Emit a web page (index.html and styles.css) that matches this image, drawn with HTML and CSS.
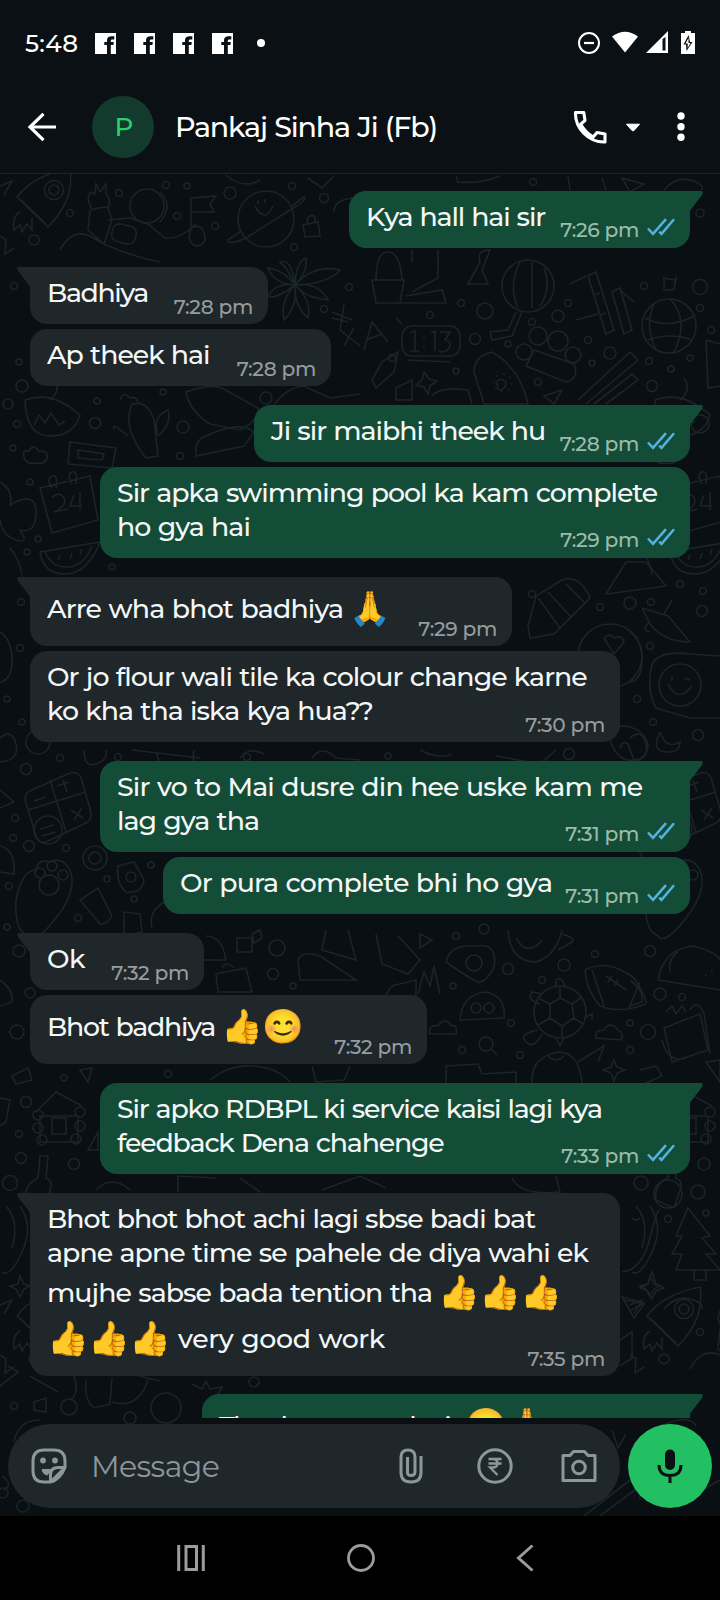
FILE: index.html
```html
<!DOCTYPE html>
<html lang="en">
<head>
<meta charset="utf-8">
<title>Pankaj Sinha Ji (Fb)</title>
<link rel="stylesheet" href="styles.css">
</head>
<body>
<svg class="defs" aria-hidden="true">
  <defs>
    <symbol id="ticks" viewBox="0 0 28 18"><path d="M1 10.5 6 15.8 19 1.2M12.3 13.6 14.5 15.8 27 1.2" fill="none" stroke="#53b3de" stroke-width="2.5"/></symbol>
    <symbol id="fb" viewBox="0 0 21 21"><path fill="#fff" fill-rule="evenodd" d="M0 0h21v21H0zM12 21h3.800V12h2.600l.4-3h-3V7.500q0-1 1.300-1h2.200V3.300h-2.500Q12 3.300 12 7.200V9H9.300v3H12z"/></symbol>
  </defs>
</svg>
<div class="phone">
  <div class="status">
    <span class="clock">5:48</span>
    <div class="notifs">
      <svg><use href="#fb"/></svg><svg><use href="#fb"/></svg><svg><use href="#fb"/></svg><svg><use href="#fb"/></svg>
    </div>
    <i class="dot"></i>
    <svg class="sys" width="120" height="26" viewBox="0 0 120 26">
      <circle cx="12" cy="13" r="10" fill="none" stroke="#fff" stroke-width="2"/><path d="M7 13h10" stroke="#fff" stroke-width="2.200"/>
      <path fill="#fff" d="M35 6.500Q48 -3 61 6.500L48 22.500z"/>
      <path fill="#fff" d="M69 23 91 1V23zM85.500 9V20.500H88.500V7z" fill-rule="evenodd"/>
      <path fill="#fff" fill-rule="evenodd" d="M104 3h4V1h6v2h4v21h-14zM111.600 5 106.500 14.500h2.500L109.500 21 115.500 12h-2.500z"/><path fill="#fff" d="M111.500 8 108.500 13.500h2.200V18l2.800-5h-2z"/>
    </svg>
  </div>
  <header class="head">
    <svg class="back" width="30" height="30" viewBox="0 0 30 30" fill="none" stroke="#fff" stroke-width="3.200"><path d="M16.500 1.800 3 15 16.500 28.200M3 15H29"/></svg>
    <div class="avatar">P</div>
    <h1>Pankaj Sinha Ji (Fb)</h1>
    <svg class="phone-icon" width="34" height="34" viewBox="0 0 34 34" fill="none" stroke="#fff" stroke-width="3.100" stroke-linejoin="round"><path d="M2.500 2.500H10.800L12 10.500 7.600 14.200Q12.600 22.500 20.200 27L24 22.500 32 24V32Q20 32.500 11 23.500T2.500 2.500z"/></svg>
    <svg class="caret" width="16" height="9" viewBox="0 0 16 9"><path d="M1.500 1.200H14.500L9.200 7.300Q8 8.500 6.800 7.300z" fill="#fff" stroke="#fff" stroke-linejoin="round"/></svg>
    <svg class="menu" width="8" height="30" viewBox="0 0 8 30" fill="#fff"><circle cx="4" cy="4" r="3.700"/><circle cx="4" cy="14.700" r="3.700"/><circle cx="4" cy="25.200" r="3.700"/></svg>
  </header>

  <main class="main">
    <svg class="wall" width="720" height="1342" viewBox="0 174 720 1342" fill="none" aria-hidden="true">
      <defs>
        <g id="edge">
          <!-- calendar, melon, calculator, paw bag, house, bottle -->
          <path d="M40 488 90 476 98 520 52 533zM52 488q-6-10 0-12t4 12M72 484q-6-10 0-12t4 12M52 497q8-6 12 1t-10 14l14-3M74 495l-4 11h12M80 492v18"/>
          <path d="M40 552Q44 575 66 574T100 542zM45 552Q52 568 68 567T92 546M58 560l2-5M70 559l2-6M80 555l2-6"/>
          <path d="M32 790 70 773Q78 771 81 778L91 812Q92 820 86 823L46 842Q38 843 36 836L25 800Q25 792 32 790zM50 780 66 832M28 810 86 792M34 801l12-4M57 786l12-4M63 780l4 12M71 810l12 8M82 808l-8 12"/>
          <circle cx="48" cy="830" r="14"/><path d="M40 829l14-4M42 836l14-4"/>
          <path d="M16 900Q22 870 36 870Q38 858 50 862Q62 856 70 870Q78 890 56 918T28 936Q14 930 16 900z"/><circle cx="49" cy="885" r="10"/><circle cx="40" cy="873" r="5"/><circle cx="52" cy="866" r="5"/><circle cx="63" cy="875" r="5"/>
          <path d="M36 1112 56 1092 82 1106M40 1116H78V1142H40zM52 1118H66V1134H52z"/><circle cx="38" cy="1115" r="5"/><circle cx="38" cy="1128" r="5"/><circle cx="42" cy="1140" r="5"/><circle cx="80" cy="1112" r="5"/><circle cx="80" cy="1126" r="5"/><circle cx="76" cy="1139" r="5"/>
          <path d="M40 1156h8l-2 22q8 4 4 12l-6 18-18-8q-2-16 12-22z"/>
          <path d="M25 400Q52 390 80 415Q74 436 50 436T25 400zM34 425l5-10 6 8 6-10 8 12 6-4M50 400q12-10 4-22"/>
          <path d="M24 457q-2-8 5-6 4-8 10 0 10 0 8 8-4 6-10 4-12 2-13-6z"/>
          <path d="M0 482Q14 490 10 505 36 490 36 512T20 530Q30 545 16 540T0 520M10 548Q20 560 22 575"/>
          <path d="M0 632Q12 640 12 660T0 682M0 738Q12 728 16 744T0 762M0 790l14 12-14 6M0 846Q16 850 14 874L0 872M0 980Q14 990 12 1002L0 1006M0 1098l10 2-4 22-6 4"/>
          <path d="M20 1206Q34 1226 22 1252T2 1272M6 1206Q20 1222 12 1248M20 1276l4 8 6 2-6 3-4 8-4-8-6-3 8-2z"/>
        </g>
        <g id="top">
          <path d="M17 197Q32 176 70 168 75 200 48 227zM20 199 46 224"/><circle cx="54" cy="190" r="9.500"/><circle cx="54" cy="190" r="5"/><path d="M20 212q-8 4-6 18l6-5 2 7 5-8 5 6 0-12"/>
          <path d="M0 186 12 181 4 195M0 236 6 240 5 254 14 248"/>
          <circle cx="147" cy="206" r="17"/><path d="M160 192Q174 206 160 222M88 200l4 10q12-4 16-2 4-8-2-14l0-10-6 8-4-8-1 10-5-2zM90 210 88 230 104 244 112 220 108 208M108 220 130 218 148 224 165 238Q180 240 196 224M60 250Q72 228 90 236L104 244M104 244Q130 256 160 262"/><rect x="112" y="225" width="24" height="18" rx="7" transform="rotate(14 124 234)"/>
          <path d="M191 228V198L216 196 210 204 214 212 192 212M191 228q-5 16 6 18 12-2 6-16-4-6-12-2"/>
          <circle cx="266" cy="219" r="28"/><path d="M292 206 304 197Q308 200 290 210L246 238Q228 246 228 240L240 232M255 206q10 18 18 0M258 200v4M265 199v4"/>
          <path d="M303 225 318 222 320 236 305 237zM307 224q0-10 7-8 2 3 1 7"/>
          <path d="M226 175Q244 190 260 180M308 178 322 188 334 176M456 176 458 182Q480 184 500 176M568 176 570 190M602 178 606 190M622 178 644 184 630 192zM664 190Q676 176 690 180T702 190M352 198Q334 200 334 212"/>
          <circle cx="166" cy="185" r="3.500"/><circle cx="187" cy="186" r="3"/><circle cx="119" cy="193" r="3.500"/><circle cx="230" cy="193" r="6"/><circle cx="70" cy="213" r="3.500"/><circle cx="177" cy="216" r="3.500"/><circle cx="34" cy="240" r="5"/><circle cx="215" cy="226" r="3.500"/><circle cx="292" cy="186" r="3.500"/><circle cx="324" cy="198" r="4.500"/><circle cx="294" cy="247" r="3.500"/>
        </g>
      </defs>
      <g stroke="#1b2428" stroke-width="1.600">
        <use href="#edge"/><use href="#edge" x="630"/><use href="#top"/><use href="#top" x="630" y="1119"/><use href="#top" y="1119"/>
        <path d="M295 285Q288 268 280 262 292 258 295 285Q296 262 306 258 308 272 295 285Q314 264 340 270 328 284 295 285Q318 282 328 300 306 298 295 285Q312 300 308 318 294 306 295 285Q298 306 284 320 280 300 295 285Q276 300 268 296 276 282 295 285Q274 284 268 268 284 270 295 285"/>
        <path d="M332 312 352 320M344 304 340 330M348 322 332 318M354 328 344 346M340 330 360 346M364 350 372 322 388 342M366 340 382 334"/>
        <rect x="402" y="326" width="58" height="30" rx="10"/><path d="M410 333l5-2v20M410 351h9M424 337v2M424 346v2M431 333l4-2v20M440 332h10l-5 8q8 2 4 8t-10 3M408 360l42 2M396 318l6 6"/>
        <path d="M372 280H404L400 303H376zM376 280Q376 252 388 252T402 280M376 303H446L442 290 406 296M412 262V250M438 250V278L412 292M468 284 480 262Q476 250 490 250L482 270 488 284z"/>
        <circle cx="528" cy="286" r="26"/><path d="M520 262Q508 286 518 308M532 262V308M544 268Q552 288 540 306M516 312 508 330 490 332 492 340 512 336 522 312"/>
        <path d="M588 276 606 334 614 330 596 272zM612 292 624 334 632 330 620 288zM570 284 586 276M576 320 598 314M620 290 634 302M594 295l6-2M600 315l6-2"/>
        <circle cx="669" cy="326" r="27"/><path d="M654 304Q644 326 656 349M670 299Q690 320 674 352M645 318Q668 330 694 316M648 340Q670 332 692 340"/>
        <path d="M664 278 674 280 676 278 674 290 664 290zM706 340 720 344M706 340 708 388 720 386"/>
        <path d="M474 372Q474 356 492 352 520 368 528 404H484zM497 384q0-6 6-4t1 8-7-4"/><circle cx="503" cy="383" r="9" stroke-dasharray="2 5"/>
        <circle cx="538" cy="336" r="9"/><circle cx="558" cy="341" r="10"/><circle cx="524" cy="352" r="8"/><circle cx="573" cy="355" r="8"/><path d="M534 350 526 366 566 382Q580 378 574 364z"/>
        <path d="M578 400 630 352 638 360 586 404M594 404 632 374 638 380 606 404"/>
        <path d="M114 430Q112 424 118 428L128 436M132 404Q148 400 154 420L158 456 146 458Q124 430 130 410zM158 436Q152 416 168 410 172 424 158 436M120 400q4-10 10-2 8-2 8 6"/>
        <path d="M70 442 116 448 112 468 68 464zM78 450 104 454 102 460 78 458zM186 392Q210 384 222 388L258 408Q260 420 240 430L210 424Q190 412 186 392zM196 456Q194 440 206 436 240 420 254 432L244 446zM272 408Q284 388 304 386L330 398 360 394"/>
        <path d="M372 380 382 362 398 352 394 372 376 388zM424 372l5 7 8 2-7 5-2 8-4-7-8-2 6-5zM396 388 412 380 412 400H396zM432 396Q440 386 468 390L472 404M544 396 562 390 554 404z"/>
        <path d="M528 626 536 596 562 580Q580 574 590 598L554 634 530 638zM538 598 560 628M548 592 572 618M566 584 586 604M606 594 626 562 646 562 666 586z"/>
        <circle cx="610" cy="656" r="32"/><path d="M604 638q6-6 10 0 8-4 10 4l-10 12zM642 608 668 616 690 642Q664 642 650 624L642 608M664 614 672 600M650 622q-10 8 0 10"/>
        <path d="M652 664Q660 650 690 654L720 656M652 664Q646 690 656 708L690 718H720"/><circle cx="680" cy="685" r="21"/><path d="M668 684q10 20 24 2M672 676v5M684 678l6 2M660 732q-10 20 8 20 12 0 12-10-14 8-20-10M610 740q0-14 16-14 20 4 22 20-2 16-20 14-12-2-18-20M620 748q2-8 8-4l6 16"/>
        <path d="M84 750Q84 768 96 764T106 750M132 750 200 758M156 752l4 12M194 750q-2 14 0 18M420 750Q440 760 452 754M496 756 540 764 556 750M312 758q10-14 24 0l24 2M240 758q8-12 24-4"/>
        <circle cx="95" cy="858" r="12"/><circle cx="95" cy="858" r="6"/><path d="M118 866 134 862 144 880Q142 894 126 892 116 884 118 866z"/><circle cx="131" cy="877" r="5"/><path d="M80 900 98 888 112 916Q108 924 100 924zM124 912l16 2 2 18-18 4zM152 928Q148 912 164 902"/>
        <path d="M237 938H252V952H237zM252 934l8-4 2 8-8 5zM206 936Q222 936 226 960L204 960M216 974 246 968 252 992H218zM222 968q4-8 12 0M326 930 322 950 356 960 348 930M298 960Q302 950 320 956L356 980H300zM376 934 382 964 408 974 420 960 398 936M386 996Q390 984 400 984L416 980V996zM418 994 424 972 430 986 434 966 440 994M420 934 432 940 420 948z"/>
        <path d="M446 962Q450 944 476 946 498 942 494 968 484 984 478 982T446 962"/><circle cx="474" cy="963" r="8"/><path d="M508 930Q510 962 536 962 556 956 562 930M516 938q12 20 26 2M562 934q14 4 10 8l-14 8"/>
        <path d="M585 970Q608 958 634 978 646 996 646 1004 620 1014 600 1006 586 990 585 970M592 970l12 36M640 982l-12 28M606 976l20 14M608 982l4-6M614 986l4-6"/><path d="M658 980Q664 948 694 946 716 952 720 960M658 980 720 990M670 972q-2-14 8-20M706 974v2M712 970v2"/>
        <circle cx="560" cy="1012" r="26"/><path d="M550 1004 560 998 572 1004 574 1018 562 1026 550 1018zM560 998V987M572 1004l10-7M574 1018l9 6M562 1026v12M550 1018l-12 7M550 1004l-12-6M556 986q-2-10 6-6l4 8M540 1004q-14-4-8-12l10 2M538 1030q-20 4-12 12t16-8M556 1038l4 8 4-8M584 1018l8-4v6M460 1020Q462 994 486 992 506 996 504 1018z"/><circle cx="476" cy="1008" r="5"/><circle cx="489" cy="1008" r="5"/>
        <path d="M430 1034q-2-10 8-8 6-10 14 0 6-2 4 8zM596 1038q-2-8 8-8 6-10 14 0 6 2 3 10zM664 1028 700 1014 708 1050 672 1062zM662 1040q6 24 24 18M666 1012l6-6 4 8 6-8 4 6M690 1010q8-12 14 4l6 40"/><circle cx="486" cy="1044" r="7"/><path d="M491 1049l6 6M532 1084Q530 1056 560 1052 580 1054 582 1084M548 1056q8 8 16 0M446 1084V1066L478 1064 482 1074 516 1072V1084M578 1062 604 1046 598 1062M614 1060l3 7 8 3-8 3-3 8-3-8-8-3 8-3zM640 1070l16-4 6 10-18 8M706 1062l14-2v22zM12 1076l16-8 4 12-16 4zM80 1070 92 1068 88 1082zM210 1080Q230 1064 254 1066T290 1082M312 1066 316 1082 344 1080 350 1066"/>
        <path d="M88 1150 98 1132V1150zM96 1190Q112 1174 130 1190M178 1192V1176L216 1178M240 1178l20 14M322 1190 360 1176 386 1188M512 1178Q520 1196 560 1192L556 1176"/>
        <path d="M622 1272Q642 1270 650 1238T660 1210M632 1218q4 4 8 0"/><path d="M688 1208 710 1236 702 1238 716 1254H706L720 1270H676L682 1254H672L682 1236H676zM694 1270v10h12v-10M652 1272l4 12 8 4-8 3-4 8-4-8-8-3 8-4zM624 1300l20 4-10 14zM620 1340 632 1332V1358L620 1366"/>
        <path d="M0 1386 18 1372 8 1366M74 1376Q80 1394 70 1400M30 1376 58 1392M86 1380Q84 1400 94 1408L110 1404 112 1378M112 1402Q138 1410 148 1380M192 1384l10 5 4-8 4 8 12-2-6 10 6 8-12 2M34 1402 46 1398V1412L34 1410z"/><circle cx="69" cy="1407" r="8"/><circle cx="130" cy="1418" r="6"/><circle cx="166" cy="1408" r="15"/>
        <path d="M612 1430 618 1448 626 1434M584 1516 630 1480M600 1516 640 1486M666 1424Q690 1414 696 1426M640 1486V1500M702 1490 720 1480M2 1476q12 8 2 14M14 1442Q18 1420 40 1420"/>
        <circle cx="23" cy="1506" r="6"/><circle cx="3" cy="1493" r="5"/>
        <circle cx="533" cy="182" r="3.500"/><circle cx="700" cy="213" r="4"/><circle cx="14" cy="286" r="3.500"/><circle cx="349" cy="287" r="3.500"/><circle cx="324" cy="309" r="3.500"/><circle cx="22" cy="386" r="6"/><circle cx="19" cy="362" r="3"/><circle cx="8" cy="404" r="5"/><circle cx="17" cy="424" r="3.500"/><circle cx="97" cy="401" r="3"/><circle cx="95" cy="423" r="5.500"/><circle cx="183" cy="427" r="6"/><circle cx="163" cy="392" r="3"/><circle cx="266" cy="398" r="6"/><circle cx="180" cy="456" r="3.500"/><circle cx="13" cy="448" r="3"/><circle cx="30" cy="482" r="3"/><circle cx="38" cy="539" r="3"/><circle cx="27" cy="552" r="3"/><circle cx="112" cy="567" r="3"/>
        <circle cx="461" cy="303" r="3.500"/><circle cx="485" cy="311" r="8"/><circle cx="430" cy="315" r="3.500"/><circle cx="568" cy="303" r="3.500"/><circle cx="558" cy="316" r="6"/><circle cx="532" cy="322" r="3.500"/><circle cx="475" cy="339" r="5.500"/><circle cx="508" cy="344" r="3"/><circle cx="588" cy="340" r="3.500"/><circle cx="610" cy="353" r="6"/><circle cx="644" cy="286" r="3.500"/><circle cx="700" cy="287" r="7.500"/><circle cx="700" cy="308" r="3.500"/><circle cx="711" cy="330" r="3.500"/><circle cx="392" cy="358" r="3.500"/><circle cx="456" cy="371" r="3"/><circle cx="538" cy="382" r="3.500"/><circle cx="592" cy="363" r="3"/><circle cx="649" cy="361" r="3.500"/><circle cx="671" cy="369" r="3"/><circle cx="652" cy="386" r="5.500"/><circle cx="690" cy="358" r="3"/><circle cx="700" cy="424" r="9"/>
        <circle cx="532" cy="594" r="3.500"/><circle cx="600" cy="607" r="3.500"/><circle cx="630" cy="603" r="6"/><circle cx="651" cy="602" r="3.500"/><circle cx="680" cy="584" r="3.500"/><circle cx="703" cy="591" r="3.500"/><circle cx="702" cy="611" r="5.500"/><circle cx="650" cy="646" r="3.500"/><circle cx="637" cy="699" r="3.500"/><circle cx="653" cy="722" r="3.500"/><circle cx="698" cy="735" r="5.500"/><circle cx="569" cy="754" r="5.500"/><circle cx="388" cy="756" r="3"/><circle cx="21" cy="602" r="3.500"/><circle cx="20" cy="648" r="3.500"/><circle cx="7" cy="699" r="3"/><circle cx="22" cy="722" r="3"/><circle cx="38" cy="742" r="12"/><circle cx="60" cy="758" r="3.500"/><circle cx="26" cy="769" r="5.500"/><circle cx="118" cy="757" r="3.500"/><circle cx="247" cy="757" r="3.500"/>
        <circle cx="15" cy="818" r="3.500"/><circle cx="13" cy="838" r="3.500"/><circle cx="29" cy="846" r="5.500"/><circle cx="66" cy="848" r="3.500"/><circle cx="151" cy="865" r="3"/><circle cx="107" cy="879" r="3"/><circle cx="9" cy="886" r="3.500"/><circle cx="134" cy="899" r="3"/><circle cx="78" cy="918" r="3.500"/><circle cx="19" cy="951" r="6"/><circle cx="7" cy="927" r="3"/><circle cx="30" cy="993" r="5"/><circle cx="17" cy="1032" r="7"/><circle cx="277" cy="948" r="8"/><circle cx="273" cy="974" r="5.500"/><circle cx="293" cy="986" r="3"/><circle cx="456" cy="936" r="3.500"/><circle cx="484" cy="929" r="5"/><circle cx="508" cy="969" r="5.500"/><circle cx="453" cy="986" r="3"/><circle cx="542" cy="980" r="3.500"/><circle cx="564" cy="965" r="6"/><circle cx="595" cy="954" r="3.500"/><circle cx="650" cy="951" r="5.500"/><circle cx="660" cy="994" r="6"/><circle cx="682" cy="997" r="3.500"/><circle cx="630" cy="1023" r="3"/><circle cx="648" cy="1032" r="7.500"/><circle cx="511" cy="1023" r="3.500"/><circle cx="520" cy="1055" r="3.500"/><circle cx="462" cy="1050" r="3.500"/><circle cx="630" cy="1050" r="3.500"/><circle cx="64" cy="1078" r="3"/><circle cx="168" cy="1074" r="3.500"/><circle cx="26" cy="1102" r="5.500"/><circle cx="19" cy="1134" r="3.500"/><circle cx="21" cy="1158" r="5.500"/><circle cx="74" cy="1164" r="5.500"/><circle cx="10" cy="1183" r="7.500"/><circle cx="704" cy="1164" r="6"/><circle cx="641" cy="1183" r="7"/><circle cx="698" cy="1192" r="7"/><circle cx="668" cy="1194" r="14"/><circle cx="668" cy="1219" r="3.500"/><circle cx="706" cy="1213" r="3"/><circle cx="14" cy="1406" r="3.500"/><circle cx="254" cy="1382" r="5"/>
      </g>
    </svg>

    <section class="chat">
      <div class="msg out tail b1"><p><span class="k113">Kya hall hai sir</span></p><div class="meta"><time>7:26 pm</time><svg><use href="#ticks"/></svg></div></div>
      <div class="msg in tail b2"><p><span class="k140">Badhiya</span></p><div class="meta"><time>7:28 pm</time></div></div>
      <div class="msg in b3"><p><span class="k101">Ap theek hai</span></p><div class="meta"><time>7:28 pm</time></div></div>
      <div class="msg out tail b4"><p><span class="k103">Ji sir maibhi theek hu</span></p><div class="meta"><time>7:28 pm</time><svg><use href="#ticks"/></svg></div></div>
      <div class="msg out wide"><p><span class="k101">Sir apka swimming pool ka kam complete</span><span class="k93">ho gya hai</span></p><div class="meta"><time>7:29 pm</time><svg><use href="#ticks"/></svg></div></div>
      <div class="msg in tail b5"><p><span class="tall"><span class="k83">Arre wha bhot badhiya</span><b class="emoji pray">🙏</b></span></p><div class="meta"><time>7:29 pm</time></div></div>
      <div class="msg in b6"><p><span class="k96">Or jo flour wali tile ka colour change karne</span><span class="k96">ko kha tha iska kya hua??</span></p><div class="meta"><time>7:30 pm</time></div></div>
      <div class="msg out tail wide"><p><span class="k85">Sir vo to Mai dusre din hee uske kam me</span><span class="k96">lag gya tha</span></p><div class="meta"><time>7:31 pm</time><svg><use href="#ticks"/></svg></div></div>
      <div class="msg out b7"><p><span class="k83">Or pura complete bhi ho gya</span></p><div class="meta"><time>7:31 pm</time><svg><use href="#ticks"/></svg></div></div>
      <div class="msg in tail b8"><p><span class="k50">Ok</span></p><div class="meta"><time>7:32 pm</time></div></div>
      <div class="msg in b9"><p><span class="tall"><span class="k128">Bhot badhiya</span><b class="emoji gap">👍</b><b class="emoji">😊</b></span></p><div class="meta"><time>7:32 pm</time></div></div>
      <div class="msg out tail wide"><p><span class="k118">Sir apko RDBPL ki service kaisi lagi kya</span><span class="k118">feedback Dena chahenge</span></p><div class="meta"><time>7:33 pm</time><svg><use href="#ticks"/></svg></div></div>
      <div class="msg in tail b6"><p><span class="k101">Bhot bhot bhot achi lagi sbse badi bat</span><span class="k93">apne apne time se pahele de diya wahi ek</span><span class="tall"><span class="k96">mujhe sabse bada tention tha</span><b class="emoji gap">👍</b><b class="emoji">👍</b><b class="emoji">👍</b></span><span class="tall"><b class="emoji">👍</b><b class="emoji">👍</b><b class="emoji">👍</b><span class="k37 after">very good work</span></span></p><div class="meta"><time>7:35 pm</time></div></div>
      <div class="msg out tail b10"><p><span class="tall"><span class="k170">Thank you much sir</span><b class="emoji gap">😊</b><b class="emoji">🙏</b></span></p></div>
    </section>

    <footer class="compose">
      <div class="field">
        <svg class="stk" width="36" height="36" viewBox="0 0 36 36" fill="none" stroke="#8d979b" stroke-width="3"><path d="M19.500 34H13Q2 34 2 23V13Q2 2 13 2H23Q34 2 34 13V19.500zM19.500 34Q29 32 34 19.500M19.500 34V27Q19.500 19.500 27 19.500H34" stroke-linejoin="round"/><path d="M11 21.500H22Q17 25.500 16.500 27 12 26.500 11 21.500z" fill="#8d979b" stroke-width="1"/><circle cx="12" cy="12.500" r="2.900" fill="#8d979b" stroke="none"/><circle cx="24" cy="12.500" r="2.900" fill="#8d979b" stroke="none"/></svg>
        <span class="ph">Message</span>
        <svg class="clip" width="24" height="36" viewBox="0 0 24 36" fill="none" stroke="#8d979b" stroke-width="3"><path d="M22 8V24.500Q22 34 12 34T2 24.500V9Q2 2 9 2T16 9V23.500Q16 27.500 12 27.500T8.500 23.500V9"/></svg>
        <svg class="rupee" width="36" height="36" viewBox="0 0 36 36" fill="none" stroke="#8d979b" stroke-width="3"><circle cx="18" cy="18" r="16.200"/><path d="M11.500 11H24.500M11.500 15.500H24.500M12 11H15.500Q20.500 11 20.500 15.300T15.500 19.500H13L20.500 27" stroke-width="2.300"/></svg>
        <svg class="cam" width="36" height="34" viewBox="0 0 36 34" fill="none" stroke="#8d979b" stroke-width="3"><path d="M2 6.500H9L12.500 2.500H23.500L27 6.500H34V31.500H2z" stroke-linejoin="round"/><circle cx="18" cy="18.500" r="6.300"/></svg>
      </div>
      <div class="mic"><svg width="26" height="34" viewBox="0 0 26 34"><rect x="8" y=".5" width="10" height="20.500" rx="5" fill="#0b1014"/><path d="M2 16q0 10.500 11 10.500T24 16M13 27v7" fill="none" stroke="#0b1014" stroke-width="3"/></svg></div>
    </footer>
  </main>

  <nav class="nav">
    <svg width="28" height="26" viewBox="0 0 28 26" fill="none" stroke="#9b9c9e" stroke-width="3"><path d="M1.700 0V26M26.300 0V26M9 1.500H19.500V24.500H9z"/></svg>
    <svg width="28" height="28" viewBox="0 0 28 28" fill="none" stroke="#9b9c9e" stroke-width="2.800"><circle cx="14" cy="14" r="12.500"/></svg>
    <svg width="18" height="28" viewBox="0 0 18 28" fill="none" stroke="#9b9c9e" stroke-width="3"><path d="M16.500 1.500 2.500 14 16.500 26.500"/></svg>
  </nav>
</div>
</body>
</html>
```
FILE: styles.css
```css
* { box-sizing: border-box; }
body { margin: 0; background: #000; font-family: "Montserrat", "Inter", sans-serif; font-weight: 500; color: #f4f7f7; }
h1, p { margin: 0; font-weight: 500; }
svg { display: block; flex: none; }
.defs { display: none; }
.phone { width: 720px; height: 1600px; display: grid; grid-template-rows: 76px 98px 1342px 84px; background: #0b1014; overflow: hidden; }

/* status bar */
.status { display: flex; align-items: center; padding: 10px 23px 0 25px; color: #fff; }
.clock { font-size: 24.5px; width: 70px; letter-spacing: .3px; }
.notifs { display: flex; gap: 18px; }
.notifs svg { width: 21px; height: 21px; }
.dot { width: 8px; height: 8px; border-radius: 50%; background: #fff; margin-left: 24px; }
.sys { margin-left: auto; }

/* contact header */
.head { display: flex; align-items: center; padding-top: 4px; border-bottom: 1px solid #1d2529; color: #fff; }
.back { margin-left: 27px; }
.avatar { width: 62px; height: 62px; margin-left: 35px; padding-left: 2px; border-radius: 50%; background: #123a2d; color: #2bd06c; display: grid; place-items: center; font-size: 26px; }
.head h1 { width: 350px; margin-left: 21px; font-size: 28.5px; letter-spacing: -1.2px; word-spacing: 1px; white-space: nowrap; }
.phone-icon { margin-left: auto; }
.caret { margin: 2px 0 0 18px; }
.menu { margin: 0 35px 0 36px; }

/* conversation over the wallpaper */
.main { display: grid; grid-template-rows: 1244px 98px; }
.wall { grid-column: 1; grid-row: 1 / 3; width: 720px; height: 1342px; background: #090f13; }
.chat { grid-column: 1; grid-row: 1; position: relative; display: flex; flex-direction: column; align-items: flex-start; gap: 5px; padding: 17px 30px 0; overflow: hidden; height: 1244px; }

.msg { position: relative; flex: none; display: grid; padding: 9px 15px 14px 17px; border-radius: 17px; font-size: 26.8px; line-height: 34px; word-spacing: 1px; }
.msg > * { grid-area: 1 / 1; }
.msg p { white-space: nowrap; }
.msg p > span { display: block; width: max-content; }
.in { background: #1f272a; }
.out { background: #144d37; align-self: flex-end; }
.msg + .tail { margin-top: 14px; }
.in.tail { border-top-left-radius: 0; }
.out.tail { border-top-right-radius: 0; }
.tail::before { content: ""; position: absolute; top: 0; width: 13px; height: 21px; background: inherit; }
.out.tail::before { left: 100%; clip-path: path("M0 0H11Q14 0 12 4L2 17Q0 19 0 21z"); }
.in.tail::before { right: 100%; clip-path: path("M13 0H2Q-1 0 1 4L11 17Q13 19 13 21z"); }
.msg p > .tall { display: flex; align-items: flex-start; height: 46px; line-height: 46px; }
.emoji { width: 41px; flex: none; font: 400 33.5px/46px "Noto Color Emoji"; letter-spacing: 0; }
.gap { margin-left: 6px; }
.pray { margin-left: 6px; }
.after { margin-left: 8px; }

/* per-line tracking */
.k37 { letter-spacing: -.37px; }
.k50 { letter-spacing: -.5px; }
.k83 { letter-spacing: -.83px; }
.k85 { letter-spacing: -.85px; }
.k93 { letter-spacing: -.93px; }
.k96 { letter-spacing: -.96px; }
.k101 { letter-spacing: -1.01px; }
.k103 { letter-spacing: -1.03px; }
.k113 { letter-spacing: -1.13px; }
.k118 { letter-spacing: -1.18px; }
.k128 { letter-spacing: -1.28px; }
.k140 { letter-spacing: -1.4px; }
.k170 { letter-spacing: -1.7px; }

.meta { align-self: end; justify-self: end; display: flex; align-items: flex-end; gap: 8px; height: 20px; margin-bottom: -6px; font-size: 20.2px; line-height: 20px; letter-spacing: -.3px; word-spacing: 0; }
.in .meta { color: #959c9f; margin-bottom: -7px; }
.out .meta { color: #9bbcad; }
.meta svg { width: 28px; height: 18px; margin-bottom: 4px; }

.b1 { width: 341px; }
.b2 { width: 238px; }
.b3 { width: 301px; }
.b4 { width: 436px; }
.wide { width: 590px; }
.b5 { width: 482px; }
.b6 { width: 590px; }
.b7 { width: 527px; }
.b8 { width: 174px; }
.b9 { width: 397px; }
.b10 { width: 488px; }
.msg.b10 { margin-top: 13px; }

/* message field */
.compose { grid-column: 1; grid-row: 2; display: flex; padding: 6px 8px 0; gap: 8px; }
.field { width: 612px; height: 84px; border-radius: 42px; background: #1f272a; display: flex; align-items: center; padding-left: 23px; }
.ph { width: 308px; margin-left: 24px; font-size: 30px; letter-spacing: -.6px; color: #8d979b; font-weight: 400; }
.rupee { margin-left: 54px; }
.cam { margin-left: 48px; }
.mic { width: 84px; height: 84px; border-radius: 50%; background: #22c063; display: grid; place-items: center; }

.nav { background: #000; display: flex; align-items: center; padding: 0 186px 0 177px; justify-content: space-between; }
```
